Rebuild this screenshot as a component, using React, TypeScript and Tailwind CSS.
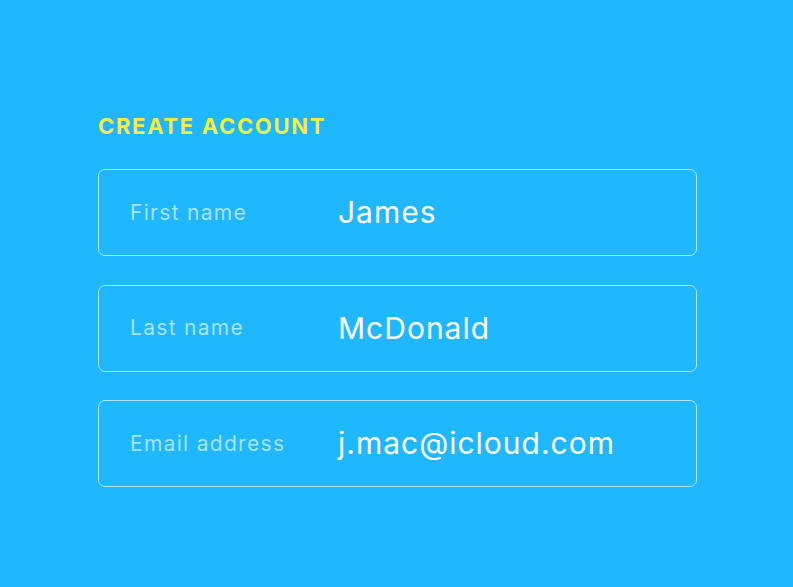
import React from 'react';

const fields = [
  { label: 'First name', value: 'James' },
  { label: 'Last name', value: 'McDonald' },
  { label: 'Email address', value: 'j.mac@icloud.com' },
];

const App: React.FC = () => {
  return (
    <div
      className="w-[793px] h-[587px] bg-[#1fb7fd] pt-[113px] pl-[98px]"
      style={{ fontFamily: 'Inter, "Noto Sans", sans-serif' }}
    >
      <h1 className="text-[22px] font-bold leading-[26px] text-[#f4ee3a] tracking-[1.7px]">
        CREATE ACCOUNT
      </h1>

      <div className="mt-[30px] flex flex-col gap-[28.5px] w-[599px]">
        {fields.map((f) => (
          <div
            key={f.label}
            className="h-[87px] rounded-[7px] border-[1.75px] border-[#b0e6ff] flex items-center pl-[31px]"
          >
            <span className="w-[208px] text-[21px] tracking-[1.3px] text-[#a6e3ff]">{f.label}</span>
            <span className="text-[30px] tracking-[1px] text-white">{f.value}</span>
          </div>
        ))}
      </div>
    </div>
  );
};

export default App;
